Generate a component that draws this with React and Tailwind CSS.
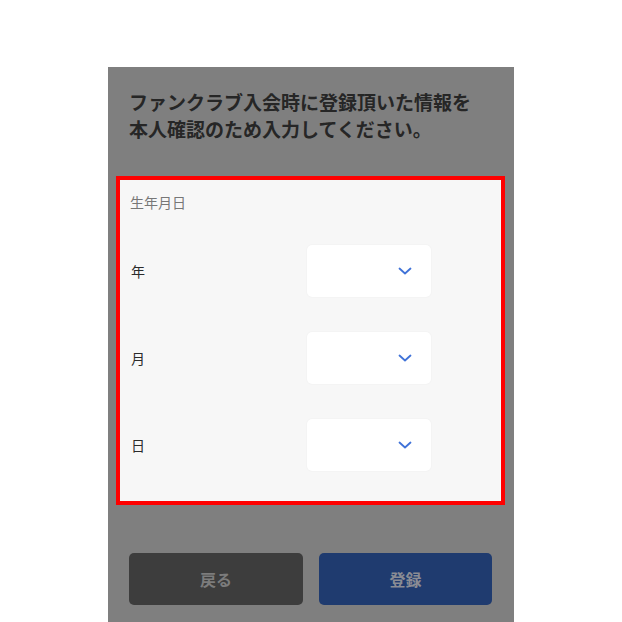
import React from 'react';

const Chevron = () => (
  <svg width="14" height="8" viewBox="0 0 14 8" fill="none" className="text-[#3f72d8]">
    <path d="M1.5 1.5L7 6.5L12.5 1.5" stroke="currentColor" strokeWidth="1.8" strokeLinecap="round" strokeLinejoin="round" />
  </svg>
);

const SelectRow = ({ label }) => (
  <div className="flex items-center h-[52px]">
    <span className="w-[187px] pl-[11px] text-[14px] text-[#2b2b2b]">{label}</span>
    <div className="w-[124px] h-[52px] bg-white rounded-[5px] shadow-[0_0_2px_rgba(0,0,0,0.06)] flex items-center justify-end pr-[19px]">
      <Chevron />
    </div>
  </div>
);

export default function App() {
  return (
    <div className="w-[622px] h-[622px] bg-white overflow-hidden" style={{ fontFamily: '"Noto Sans CJK JP", "Noto Sans", sans-serif' }}>
      <div className="ml-[108px] mt-[67px] w-[406px] h-[555px] bg-[#7f7f7f] pt-[21px]">
        {/* heading */}
        <h1 className="pl-[21px] text-[19px] leading-[27px] font-bold text-[#262626]">
          ファンクラブ入会時に登録頂いた情報を
          <br />
          本人確認のため入力してください。
        </h1>

        {/* highlighted birthday block */}
        <div className="mt-[34px] ml-[8px] w-[389px] border-[4px] border-[#ff0000] bg-[#f7f7f7] pt-[12px] pb-[30px]">
          <p className="pl-[10px] text-[14px] leading-[20px] text-[#777777]">生年月日</p>
          <div className="mt-[33px] flex flex-col gap-[35px]">
            <SelectRow label="年" />
            <SelectRow label="月" />
            <SelectRow label="日" />
          </div>
        </div>

        {/* buttons */}
        <div className="mt-[48px] pl-[21px] flex gap-[16px]">
          <button className="w-[174px] h-[52px] rounded-[5px] bg-[#3d3d3d] text-[#7c7c7c] text-[16px] font-bold">
            戻る
          </button>
          <button className="w-[173px] h-[52px] rounded-[5px] bg-[#1f3b6f] text-[#8a8c94] text-[16px] font-bold">
            登録
          </button>
        </div>
      </div>
    </div>
  );
}
